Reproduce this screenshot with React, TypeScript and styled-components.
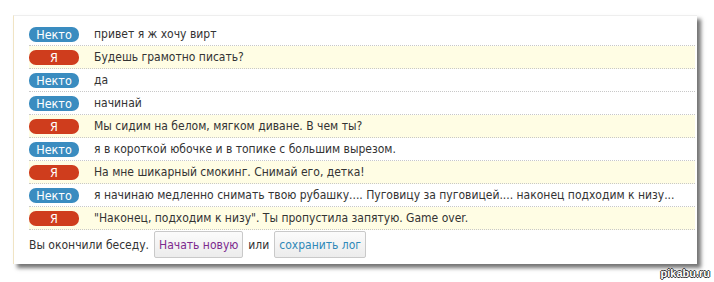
import React from "react";
import styled, { createGlobalStyle } from "styled-components";

const Global = createGlobalStyle`
  html, body { margin: 0; padding: 0; background: #ffffff; }
  body { font-family: "DejaVu Sans Condensed", "DejaVu Sans", sans-serif; }
`;

const Page = styled.div`
  width: 714px;
  height: 282px;
  padding: 15px 0 0 13px;
  box-sizing: border-box;
  display: flex;
  flex-direction: column;
`;

const Panel = styled.div`
  width: 684px;
  box-sizing: border-box;
  background: #ffffff;
  border-left: 1px solid #f0e4c4;
  border-top: 1px solid #eeeeee;
  padding: 7px 2px 5px 15px;
  box-shadow: 4px 4px 4px rgba(0, 0, 0, 0.55);
  display: flex;
  flex-direction: column;
`;

const Row = styled.div<{ $me: boolean }>`
  height: 22px;
  border-bottom: 1px dotted #c8c8c8;
  background: ${(p) => (p.$me ? "#fffde4" : "transparent")};
  display: flex;
  align-items: center;
  gap: 15px;
`;

const Badge = styled.span<{ $me: boolean }>`
  flex: 0 0 50px;
  height: 15px;
  border-radius: 7px;
  background: ${(p) => (p.$me ? "#cf3d1d" : "#3a8cc0")};
  color: #ffffff;
  font-size: 12.5px;
  line-height: 15px;
  text-align: center;
`;

const Msg = styled.span`
  color: #333333;
  font-size: 12px;
  white-space: nowrap;
`;

const Footer = styled.div`
  display: flex;
  align-items: center;
  gap: 5px;
  padding-top: 1px;
  padding-bottom: 1px;
  color: #333333;
  font-size: 12px;
`;

const Btn = styled.span<{ $tone: "purple" | "blue" }>`
  height: 25px;
  padding: 0 4px;
  display: flex;
  align-items: center;
  border: 1px solid #c9c9c9;
  border-radius: 2px;
  background: linear-gradient(#fbfbfb, #ececec);
  color: ${(p) => (p.$tone === "purple" ? "#7d2a8e" : "#2f88b8")};
  font-size: 12px;
`;

const Mark = styled.div`
  display: flex;
  justify-content: flex-end;
  padding: 3px 4px 0 0;
  font-family: "Liberation Sans", Arial, sans-serif;
  font-size: 11px;
  font-weight: bold;
  color: #ffffff;
  text-shadow: -1px 0 #333, 1px 0 #333, 0 -1px #333, 0 1px #333;
`;

const messages: { me: boolean; text: string }[] = [
  { me: false, text: "привет я ж хочу вирт" },
  { me: true, text: "Будешь грамотно писать?" },
  { me: false, text: "да" },
  { me: false, text: "начинай" },
  { me: true, text: "Мы сидим на белом, мягком диване. В чем ты?" },
  { me: false, text: "я в короткой юбочке и в топике с большим вырезом." },
  { me: true, text: "На мне шикарный смокинг. Снимай его, детка!" },
  {
    me: false,
    text: "я начинаю медленно снимать твою рубашку.... Пуговицу за пуговицей.... наконец подходим к низу...",
  },
  { me: true, text: "\"Наконец, подходим к низу\". Ты пропустила запятую. Game over." },
];

export default function App() {
  return (
    <>
      <Global />
      <Page>
        <Panel>
          {messages.map((m, i) => (
            <Row key={i} $me={m.me}>
              <Badge $me={m.me}>{m.me ? "Я" : "Некто"}</Badge>
              <Msg>{m.text}</Msg>
            </Row>
          ))}
          <Footer>
            <span>Вы окончили беседу.</span>
            <Btn $tone="purple">Начать новую</Btn>
            <span>или</span>
            <Btn $tone="blue">сохранить лог</Btn>
          </Footer>
        </Panel>
        <Mark>pikabu.ru</Mark>
      </Page>
    </>
  );
}
